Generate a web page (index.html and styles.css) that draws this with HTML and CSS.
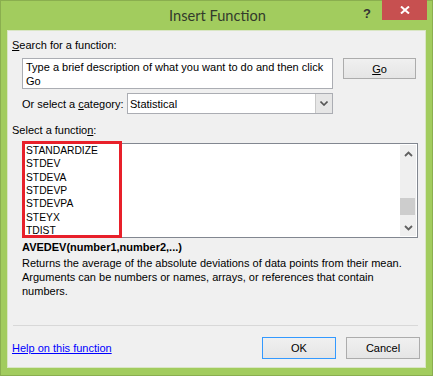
FILE: index.html
```html
<!DOCTYPE html>
<html lang="en">
<head>
  <meta charset="UTF-8">
  <title>Insert Function</title>
  <link rel="stylesheet" href="styles.css">
</head>
<body>
  <!-- Dialog window frame -->
  <div class="window">
    <div class="titlebar">
      <div></div>
      <div class="title">Insert Function</div>
      <div class="controls">
        <span class="help">?</span>
        <span class="close">
          <svg width="10" height="8" viewBox="0 0 10 8">
            <path d="M1 0.5 L9 7.5 M9 0.5 L1 7.5" stroke="#fff" stroke-width="2" fill="none"/>
          </svg>
        </span>
      </div>
    </div>

    <div class="client">
      <div class="label"><u>S</u>earch for a function:</div>
      <div class="search-row">
        <div class="textbox">Type a brief description of what you want to do and then click Go</div>
        <button class="btn go"><u>G</u>o</button>
      </div>

      <div class="category-row">
        <span class="cat-label">Or select a <u>c</u>ategory:</span>
        <div class="select">
          <span class="select-value">Statistical</span>
          <span class="select-arrow">
            <svg width="8" height="5" viewBox="0 0 8 5">
              <path d="M0.5 0.5 L4 4 L7.5 0.5" stroke="#555" stroke-width="1.6" fill="none"/>
            </svg>
          </span>
        </div>
      </div>

      <div class="label fn-label">Select a functio<u>n</u>:</div>
      <div class="listbox">
        <ul class="items">
          <li>STANDARDIZE</li>
          <li>STDEV</li>
          <li>STDEVA</li>
          <li>STDEVP</li>
          <li>STDEVPA</li>
          <li>STEYX</li>
          <li>TDIST</li>
        </ul>
        <div class="scrollbar">
          <span class="arrow">
            <svg width="9" height="6" viewBox="0 0 9 6">
              <path d="M1 5 L4.5 1.5 L8 5" stroke="#606060" stroke-width="1.8" fill="none"/>
            </svg>
          </span>
          <div class="track"><div class="thumb"></div></div>
          <span class="arrow">
            <svg width="9" height="6" viewBox="0 0 9 6">
              <path d="M1 1 L4.5 4.5 L8 1" stroke="#606060" stroke-width="1.8" fill="none"/>
            </svg>
          </span>
        </div>
        <!-- red highlight drawn over the list -->
        <div class="highlight"></div>
      </div>

      <div class="syntax">AVEDEV(number1,number2,...)</div>
      <p class="desc">Returns the average of the absolute deviations of data points from their mean.<br>Arguments can be numbers or names, arrays, or references that contain<br>numbers.</p>

      <div class="separator"></div>

      <div class="footer">
        <a href="#" class="help-link">Help on this function</a>
        <div class="buttons">
          <button class="btn default">OK</button>
          <button class="btn">Cancel</button>
        </div>
      </div>
    </div>
  </div>
</body>
</html>
```

FILE: styles.css
```css
/* Page */
body {
  margin: 0;
  font-family: 'Liberation Sans', sans-serif;
  font-size: 11px;
  color: #000;
}

/* Window frame */
.window {
  width: 433px;
  height: 376px;
  box-sizing: border-box;
  background: #a2cc5e;
  border: 1px solid #8aae4f;
}
.titlebar {
  height: 29px;
  display: grid;
  grid-template-columns: 1fr auto 1fr;
  align-items: start;
}
.title {
  font-family: 'Lato', sans-serif;
  font-size: 14.6px;
  color: #333a2c;
  line-height: 29px;
  padding-left: 2px;
}
.controls {
  display: flex;
  justify-content: flex-end;
  align-items: flex-start;
  margin-right: 5px;
}
.help {
  font-weight: bold;
  font-size: 13px;
  color: #333;
  margin: 5px 11px 0 0;
}
.close {
  width: 45px;
  height: 20px;
  margin-top: -1px;
  background: #c75050;
  display: flex;
  align-items: center;
  justify-content: center;
}

/* Client area */
.client {
  margin: 0 6px;
  height: 338px;
  box-sizing: border-box;
  background: #f0f0f0;
  border: 1px solid #d9e6c4;
  padding: 7px 5px 0 4px;
  position: relative;
}
.label {
  line-height: 14px;
  height: 14px;
  white-space: nowrap;
}
.search-row {
  display: flex;
  align-items: flex-start;
  gap: 10px;
  margin: 6px 0 0 10px;
}
.textbox {
  width: 311px;
  height: 31px;
  box-sizing: border-box;
  background: #fff;
  border: 1px solid #abadb3;
  padding: 1px 3px;
  line-height: 14px;
}
.btn {
  font-family: inherit;
  font-size: 11px;
  width: 74px;
  height: 22px;
  padding: 0;
  border: 1px solid #acacac;
  background: linear-gradient(#f0f0f0, #e5e5e5);
  color: #000;
}
.btn.go {
  width: 73px;
  height: 21px;
}
.btn.default {
  border-color: #3399ff;
}

.category-row {
  display: flex;
  align-items: center;
  margin: 4px 0 0 10px;
}
.cat-label {
  width: 105px;
  white-space: nowrap;
}
.select {
  width: 206px;
  height: 21px;
  box-sizing: border-box;
  background: #fff;
  border: 1px solid #abadb3;
  display: flex;
  align-items: center;
}
.select-value {
  flex: 1;
  padding-left: 2px;
}
.select-arrow {
  width: 16px;
  height: 19px;
  background: #e6e6e6;
  border-left: 1px solid #c9c9c9;
  display: flex;
  align-items: center;
  justify-content: center;
}

.fn-label {
  margin-top: 9px;
}

/* Function list */
.listbox {
  position: relative;
  margin: 6px 0 0 10px;
  width: 396px;
  height: 95px;
  box-sizing: border-box;
  border: 1px solid #828790;
  background: #fff;
  display: flex;
}
.items {
  flex: 1;
  list-style: none;
  margin: 0;
  padding: 0 0 0 3px;
  overflow: hidden;
  font-size: 10.3px;
  line-height: 13.33px;
}
.scrollbar {
  width: 16px;
  margin: 1px 1px 1px 0;
  background: #efefef;
  display: flex;
  flex-direction: column;
  align-items: center;
}
.scrollbar .arrow {
  height: 17px;
  display: flex;
  align-items: center;
}
.track {
  flex: 1;
  width: 100%;
}
.thumb {
  width: 15px;
  height: 17px;
  margin-top: 36px;
  background: #cdcdcd;
}
.highlight {
  position: absolute;
  left: -1px;
  top: -3px;
  width: 94px;
  height: 91px;
  border: 3px solid #e8202a;
}

.syntax {
  font-weight: bold;
  line-height: 14px;
  margin: 2px 0 0 10px;
}
.desc {
  margin: 2px 0 0 10px;
  line-height: 14px;
  white-space: nowrap;
}

.separator {
  margin: 27px 0 0 1px;
  width: 405px;
  border-top: 1px solid #d8d8d8;
}

.footer {
  display: flex;
  justify-content: space-between;
  align-items: center;
  margin-top: 11px;
}
.help-link {
  color: #0000ff;
  text-decoration: underline;
}
.buttons {
  display: flex;
  gap: 10px;
}
```
